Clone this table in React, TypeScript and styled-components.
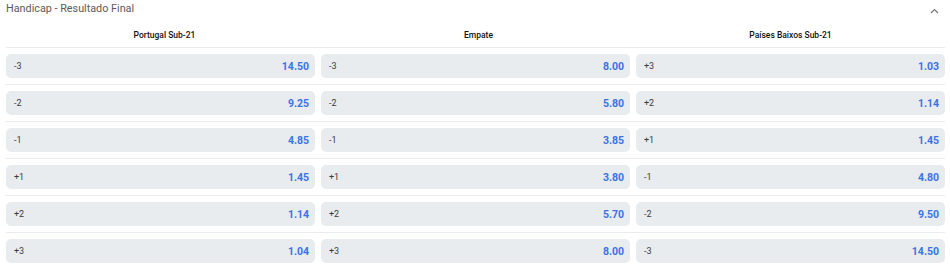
import React from 'react';
import styled, { createGlobalStyle } from 'styled-components';

const GlobalStyle = createGlobalStyle`
  html, body {
    margin: 0;
    padding: 0;
    background: #ffffff;
    font-family: Roboto, "Liberation Sans", Arial, sans-serif;
  }
`;

const Market = styled.section`
  width: 950px;
  box-sizing: border-box;
  padding: 0 5px 0 6px;
`;

const MarketHeader = styled.div`
  display: flex;
  align-items: center;
  justify-content: space-between;
  height: 18px;
`;

const Title = styled.span`
  font-size: 10.8px;
  color: #5a5a5a;
  line-height: 18px;
`;

const Chevron = styled.svg`
  width: 9px;
  height: 6px;
  margin-right: 6px;
  margin-top: 4px;
`;

const ColumnHeads = styled.div`
  display: grid;
  grid-template-columns: repeat(3, 1fr);
  column-gap: 6px;
  height: 29px;
  align-items: end;
  padding-bottom: 6px;
  box-sizing: border-box;
`;

const ColumnHead = styled.div<{ $shift?: number }>`
  text-align: center;
  font-size: 8.5px;
  font-weight: 500;
  color: #111;
  line-height: 12px;
  padding-left: ${(p) => p.$shift ?? 0}px;
`;

const Row = styled.div`
  display: grid;
  grid-template-columns: repeat(3, 1fr);
  column-gap: 6px;
  border-top: 1px solid #e9ebee;
  padding: 6px 0;
`;

const OddButton = styled.button`
  display: flex;
  align-items: center;
  justify-content: space-between;
  height: 24px;
  padding: 0 6px 0 8px;
  border: none;
  border-radius: 5px;
  background: #e9ecef;
  font-family: inherit;
  cursor: pointer;
`;

const Line = styled.span`
  font-size: 9px;
  color: #3a3a3a;
`;

const Price = styled.span`
  font-size: 10.5px;
  font-weight: 700;
  color: #3a72e6;
`;

type Odd = { line: string; price: string };

const columns = [
  { name: 'Portugal Sub-21', shift: 8 },
  { name: 'Empate', shift: 6 },
  { name: 'Países Baixos Sub-21', shift: 0 },
];

const rows: Odd[][] = [
  [{ line: '-3', price: '14.50' }, { line: '-3', price: '8.00' }, { line: '+3', price: '1.03' }],
  [{ line: '-2', price: '9.25' }, { line: '-2', price: '5.80' }, { line: '+2', price: '1.14' }],
  [{ line: '-1', price: '4.85' }, { line: '-1', price: '3.85' }, { line: '+1', price: '1.45' }],
  [{ line: '+1', price: '1.45' }, { line: '+1', price: '3.80' }, { line: '-1', price: '4.80' }],
  [{ line: '+2', price: '1.14' }, { line: '+2', price: '5.70' }, { line: '-2', price: '9.50' }],
  [{ line: '+3', price: '1.04' }, { line: '+3', price: '8.00' }, { line: '-3', price: '14.50' }],
];

const App: React.FC = () => {
  return (
    <>
      <GlobalStyle />
      <Market>
        <MarketHeader>
          <Title>Handicap - Resultado Final</Title>
          <Chevron viewBox="0 0 9 6">
            <path d="M1 5 L4.5 1.5 L8 5" fill="none" stroke="#777" strokeWidth="1.2" />
          </Chevron>
        </MarketHeader>
        <ColumnHeads>
          {columns.map((c) => (
            <ColumnHead key={c.name} $shift={c.shift}>
              {c.name}
            </ColumnHead>
          ))}
        </ColumnHeads>
        {rows.map((row, i) => (
          <Row key={i}>
            {row.map((odd, j) => (
              <OddButton key={j}>
                <Line>{odd.line}</Line>
                <Price>{odd.price}</Price>
              </OddButton>
            ))}
          </Row>
        ))}
      </Market>
    </>
  );
};

export default App;
